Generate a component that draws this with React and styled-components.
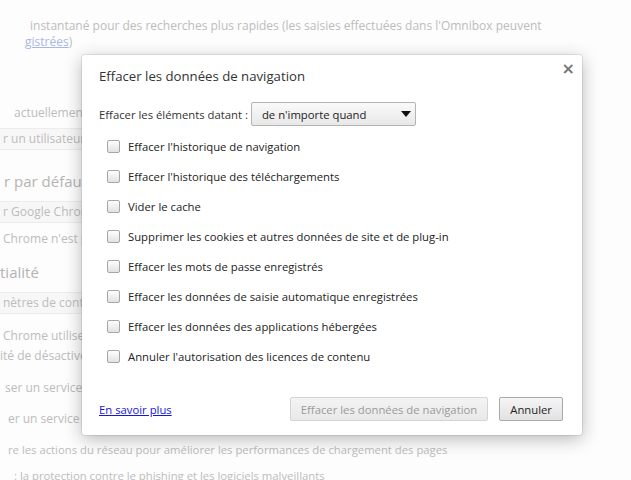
import styled, { createGlobalStyle } from "styled-components"
import React from "react"

const GlobalStyle = createGlobalStyle`
html, body {
    margin:0;
    padding:0;
    background:#fdfdfd;
    font-family:"Open Sans", "Noto Sans", sans-serif;
}
`

const items = [
    "Effacer l'historique de navigation",
    "Effacer l'historique des téléchargements",
    "Vider le cache",
    "Supprimer les cookies et autres données de site et de plug-in",
    "Effacer les mots de passe enregistrés",
    "Effacer les données de saisie automatique enregistrées",
    "Effacer les données des applications hébergées",
    "Annuler l'autorisation des licences de contenu",
]

export default function App() {
    return (
        <>
            <GlobalStyle />
            <PAGE>
                <Line $top={18} $left={30}>instantané pour des recherches plus rapides (les saisies effectuées dans l'Omnibox peuvent</Line>
                <Line $top={0} $left={25}><a>gistrées</a>)</Line>
                <Hidden>
                    <Line $top={55} $left={14}>actuellement</Line>
                    <GhostButton $top={7} $left={-10}>r un utilisateur</GhostButton>
                    <Heading $top={21} $left={4}>r par défaut</Heading>
                    <GhostButton $top={10} $left={-10}>r Google Chrome</GhostButton>
                    <Line $top={8} $left={3}>Chrome n'est pas</Line>
                    <Heading $top={15} $left={0}>tialité</Heading>
                    <GhostButton $top={10} $left={-10}>nètres de contenu</GhostButton>
                    <Line $top={14} $left={3}>Chrome utilise des</Line>
                    <Line $top={4} $left={0}>ité de désactiver</Line>
                    <Line $top={16} $left={5}>ser un service Web</Line>
                    <Line $top={15} $left={8}>er un service de</Line>
                </Hidden>
                <Small $top={15} $left={8}>re les actions du réseau pour améliorer les performances de chargement des pages</Small>
                <Small $top={10} $left={14}>: la protection contre le phishing et les logiciels malveillants</Small>
            </PAGE>
            <DIALOG>
                <Header>
                    <h1>Effacer les données de navigation</h1>
                    <Close>×</Close>
                </Header>
                <Period>
                    <span>Effacer les éléments datant :</span>
                    <Select>
                        <span>de n'importe quand</span>
                        <Arrow />
                    </Select>
                </Period>
                <List>
                    {items.map((t) => (
                        <Row key={t}>
                            <Box />
                            <span>{t}</span>
                        </Row>
                    ))}
                </List>
                <Footer>
                    <a href="#">En savoir plus</a>
                    <Buttons>
                        <Button disabled>Effacer les données de navigation</Button>
                        <Button>Annuler</Button>
                    </Buttons>
                </Footer>
            </DIALOG>
        </>
    )
}

const PAGE = styled.div`
width:631px;
height:480px;
overflow:hidden;
display:flex;
flex-direction:column;
align-items:flex-start;
color:#bcbcbc;
font-size:12px;
& > *{
    flex-shrink:0;
}
`

const Hidden = styled.div`
width:84px;
overflow:hidden;
display:flex;
flex-direction:column;
align-items:flex-start;
`

const Line = styled.div`
flex-shrink:0;
margin-top:${(p) => p.$top}px;
margin-left:${(p) => p.$left}px;
line-height:16px;
white-space:nowrap;
a{
    color:#a9b6e6;
    text-decoration:underline;
}
`

const Small = styled(Line)`
font-size:11.3px;
`

const Heading = styled(Line)`
font-size:15px;
line-height:20px;
color:#b4b4b4;
`

const GhostButton = styled(Line)`
height:20px;
line-height:20px;
padding:0 12px;
border:1px solid #ececec;
border-radius:2px;
background:#f7f7f7;
`

const DIALOG = styled.div`
position:absolute;
left:82px;
top:55px;
width:500px;
height:380px;
box-sizing:border-box;
background:#fff;
border-radius:3px;
box-shadow:0 0 0 1px rgba(0,0,0,0.08), 0 4px 18px rgba(0,0,0,0.28);
padding:0 19px 14px 17px;
display:flex;
flex-direction:column;
color:#333;
font-size:11.3px;
`

const Header = styled.div`
display:flex;
justify-content:space-between;
align-items:flex-start;
padding-top:11px;
h1{
    margin:0;
    font-size:13.2px;
    font-weight:normal;
    line-height:20px;
    color:#333;
}
`

const Close = styled.div`
font-family:"DejaVu Sans", sans-serif;
font-size:16px;
font-weight:bold;
line-height:16px;
color:#777;
margin-top:-5px;
margin-right:-12px;
`

const Period = styled.div`
display:flex;
align-items:center;
gap:3px;
margin-top:16px;
`

const Select = styled.div`
width:165px;
height:24px;
box-sizing:border-box;
display:flex;
align-items:center;
justify-content:space-between;
padding:0 4px 0 10px;
border:1px solid #b4b4b4;
border-radius:2px;
background:linear-gradient(#fafafa, #e8e8e8);
color:#222;
`

const Arrow = styled.div`
width:0;
height:0;
border-left:5px solid transparent;
border-right:5px solid transparent;
border-top:6px solid #111;
`

const List = styled.div`
display:flex;
flex-direction:column;
margin-top:5px;
`

const Row = styled.div`
height:30px;
display:flex;
align-items:center;
gap:8px;
padding-left:8px;
color:#222;
`

const Box = styled.div`
width:13px;
height:13px;
box-sizing:border-box;
border:1px solid #a6a6a6;
border-radius:2px;
background:linear-gradient(#fdfdfd, #e2e2e2);
`

const Footer = styled.div`
margin-top:auto;
display:flex;
align-items:center;
justify-content:space-between;
a{
    color:#1515dd;
    text-decoration:underline;
}
`

const Buttons = styled.div`
display:flex;
gap:11px;
`

const Button = styled.button`
height:24px;
padding:0 10px;
font-family:inherit;
font-size:11.3px;
border-radius:2px;
border:1px solid ${(p) => (p.disabled ? "#d4d4d4" : "#a9a9a9")};
background:${(p) => (p.disabled ? "linear-gradient(#f4f4f4, #e9e9e9)" : "linear-gradient(#f5f5f5, #e2e2e2)")};
color:${(p) => (p.disabled ? "#9a9a9a" : "#222")};
`
